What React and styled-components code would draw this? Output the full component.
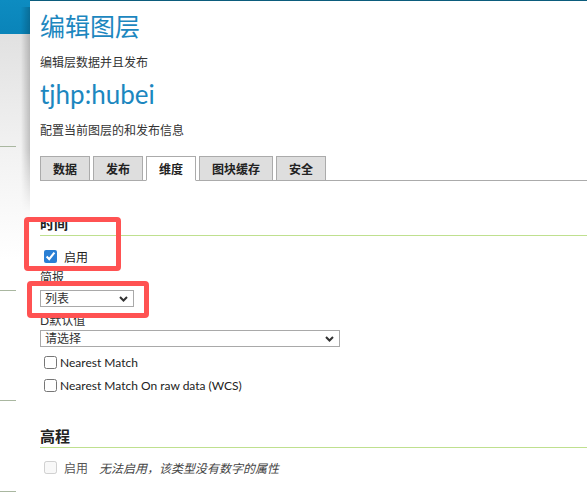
import styled, { createGlobalStyle } from 'styled-components'

const GlobalStyle = createGlobalStyle`
  body {
    margin: 0;
    background: #fff;
    font-family: Lato, "Noto Sans CJK SC", sans-serif;
    color: #333;
  }
`

const Page = styled.div`
  position: relative;
  display: grid;
  grid-template-columns: 30px 1fr;
  width: 587px;
  height: 495px;
  overflow: hidden;
  background: linear-gradient(#0b5c7c 0 1px, #fff 1px);
`

const Sidebar = styled.div`
  display: flex;
  flex-direction: column;
  background: linear-gradient(#0d8cc1 0, #0a84b9 34px, #e1e1e1 34px, #f3f3f3 160px, #fff 260px);
`

const SideTop = styled.div`
  height: 35px;
  flex: none;
`

const NavItem = styled.div`
  height: ${(p) => p.h}px;
  flex: none;
  display: flex;
  align-items: flex-end;
`

const Divider = styled.div`
  width: 16px;
  height: 1px;
  background: #a9b7a0;
`

const Main = styled.div`
  display: flex;
  flex-direction: column;
  min-width: 0;
`

const Head = styled.div`
  position: relative;
  margin-top: 1px;
  height: 204px;
  padding-left: 10px;
  background: #fff;
  border-top-left-radius: 9px;
  &::before {
    content: '';
    position: absolute;
    left: -9px;
    top: 6px;
    width: 9px;
    height: 205px;
    background: linear-gradient(to left, rgba(0, 0, 0, 0.2), rgba(0, 0, 0, 0));
    -webkit-mask-image: linear-gradient(#000 70%, transparent);
    mask-image: linear-gradient(#000 70%, transparent);
  }
`

const Title = styled.h1`
  margin: 10px 0 0;
  font-size: 25px;
  line-height: 30px;
  font-weight: 400;
  color: #1c87bf;
`

const LayerName = styled(Title)`
  margin-top: 8px;
  font-size: 26px;
`

const Note = styled.p`
  margin: ${(p) => p.top}px 0 0;
  font-size: 12px;
  line-height: 16px;
`

const TabBar = styled.ul`
  display: flex;
  gap: 3px;
  list-style: none;
  margin: 17px 0 0;
  padding: 0;
  border-bottom: 1px solid #ababab;
`

const Tab = styled.li`
  height: 23px;
  margin-bottom: -1px;
  padding: 0 12px;
  display: flex;
  align-items: center;
  border: 1px solid #ababab;
  border-bottom-color: ${(p) => (p.active ? '#fff' : '#ababab')};
  background: ${(p) => (p.active ? '#fff' : '#dedede')};
  font-size: 12px;
  font-weight: 700;
  color: #222;
`

const Form = styled.div`
  padding-left: 10px;
  font-size: 12px;
`

const SectionTitle = styled.h3`
  margin: ${(p) => p.top}px 0 0;
  padding-bottom: 2px;
  font-size: ${(p) => p.size}px;
  line-height: 18px;
  font-weight: 700;
  color: #222;
  border-bottom: 1px solid #bfe08f;
`

const CheckRow = styled.label`
  display: flex;
  align-items: center;
  height: 20px;
  margin-top: ${(p) => p.top}px;
  font-size: 12px;
  color: ${(p) => (p.disabled ? '#555' : '#222')};
  input {
    width: 13px;
    height: 13px;
    margin: 0 3px 0 4px;
    accent-color: #2a7fd4;
  }
`

const Spaced = styled.span`
  margin-left: 4px;
`

const Label = styled.div`
  margin-top: ${(p) => p.top}px;
  line-height: 14px;
  font-size: 12px;
  color: #333;
`

const Hint = styled.em`
  margin-left: 11px;
  color: #444;
`

const SelectWrap = styled.div`
  position: relative;
  width: ${(p) => p.w}px;
  margin-top: ${(p) => p.top}px;
  svg {
    position: absolute;
    right: 6px;
    top: 6px;
    pointer-events: none;
  }
`

const Select = styled.select`
  appearance: none;
  display: block;
  width: 100%;
  height: 17px;
  margin: 0;
  padding: 0 20px 0 4px;
  border: 1px solid #a9a9a9;
  border-radius: 0;
  background: #fff;
  font-family: Lato, "Noto Sans CJK SC", sans-serif;
  font-size: 12px;
  line-height: 15px;
  color: #333;
`

const Mark = styled.div`
  position: absolute;
  left: ${(p) => p.x}px;
  top: ${(p) => p.y}px;
  width: ${(p) => p.w}px;
  height: ${(p) => p.h}px;
  border: 5px solid #ff5252;
  border-radius: 4px;
  box-sizing: border-box;
  pointer-events: none;
`

const Chevron = () => (
  <svg width="9" height="6" viewBox="0 0 9 6">
    <path d="M1 1 L4.5 4.5 L8 1" fill="none" stroke="#333" strokeWidth="2" />
  </svg>
)

const Dropdown = ({ w, top, options }) => (
  <SelectWrap w={w} top={top}>
    <Select defaultValue={options[0]}>
      {options.map((o) => (
        <option key={o}>{o}</option>
      ))}
    </Select>
    <Chevron />
  </SelectWrap>
)

const tabs = ['数据', '发布', '维度', '图块缓存', '安全']
const navHeights = [112, 144, 110, 91]

export default function App() {
  return (
    <>
      <GlobalStyle />
      <Page>
        <Sidebar>
          <SideTop />
          {navHeights.map((h, i) => (
            <NavItem key={i} h={h}>
              <Divider />
            </NavItem>
          ))}
        </Sidebar>
        <Main>
          <Head>
            <Title>编辑图层</Title>
            <Note top={14}>编辑层数据并且发布</Note>
            <LayerName>tjhp:hubei</LayerName>
            <Note top={14}>配置当前图层的和发布信息</Note>
            <TabBar>
              {tabs.map((t) => (
                <Tab key={t} active={t === '维度'}>
                  {t}
                </Tab>
              ))}
            </TabBar>
          </Head>
          <Form>
            <SectionTitle top={10} size={14}>时间</SectionTitle>
            <CheckRow top={10}>
              <input type="checkbox" defaultChecked />
              <Spaced>启用</Spaced>
            </CheckRow>
            <Label top={5}>简报</Label>
            <Dropdown w={94} top={5} options={['列表', '连续间隔', '间隔和分辨率']} />
            <Label top={7}>D默认值</Label>
            <Dropdown w={300} top={2} options={['请选择']} />
            <CheckRow top={5}>
              <input type="checkbox" />Nearest Match
            </CheckRow>
            <CheckRow top={3}>
              <input type="checkbox" />Nearest Match On raw data (WCS)
            </CheckRow>
            <SectionTitle top={32} size={15}>高程</SectionTitle>
            <CheckRow top={9} disabled>
              <input type="checkbox" disabled />
              <Spaced>启用</Spaced>
              <Hint>无法启用，该类型没有数字的属性</Hint>
            </CheckRow>
          </Form>
        </Main>
        <Mark x={24} y={217} w={97} h={54} />
        <Mark x={27} y={281} w={122} h={37} />
      </Page>
    </>
  )
}
